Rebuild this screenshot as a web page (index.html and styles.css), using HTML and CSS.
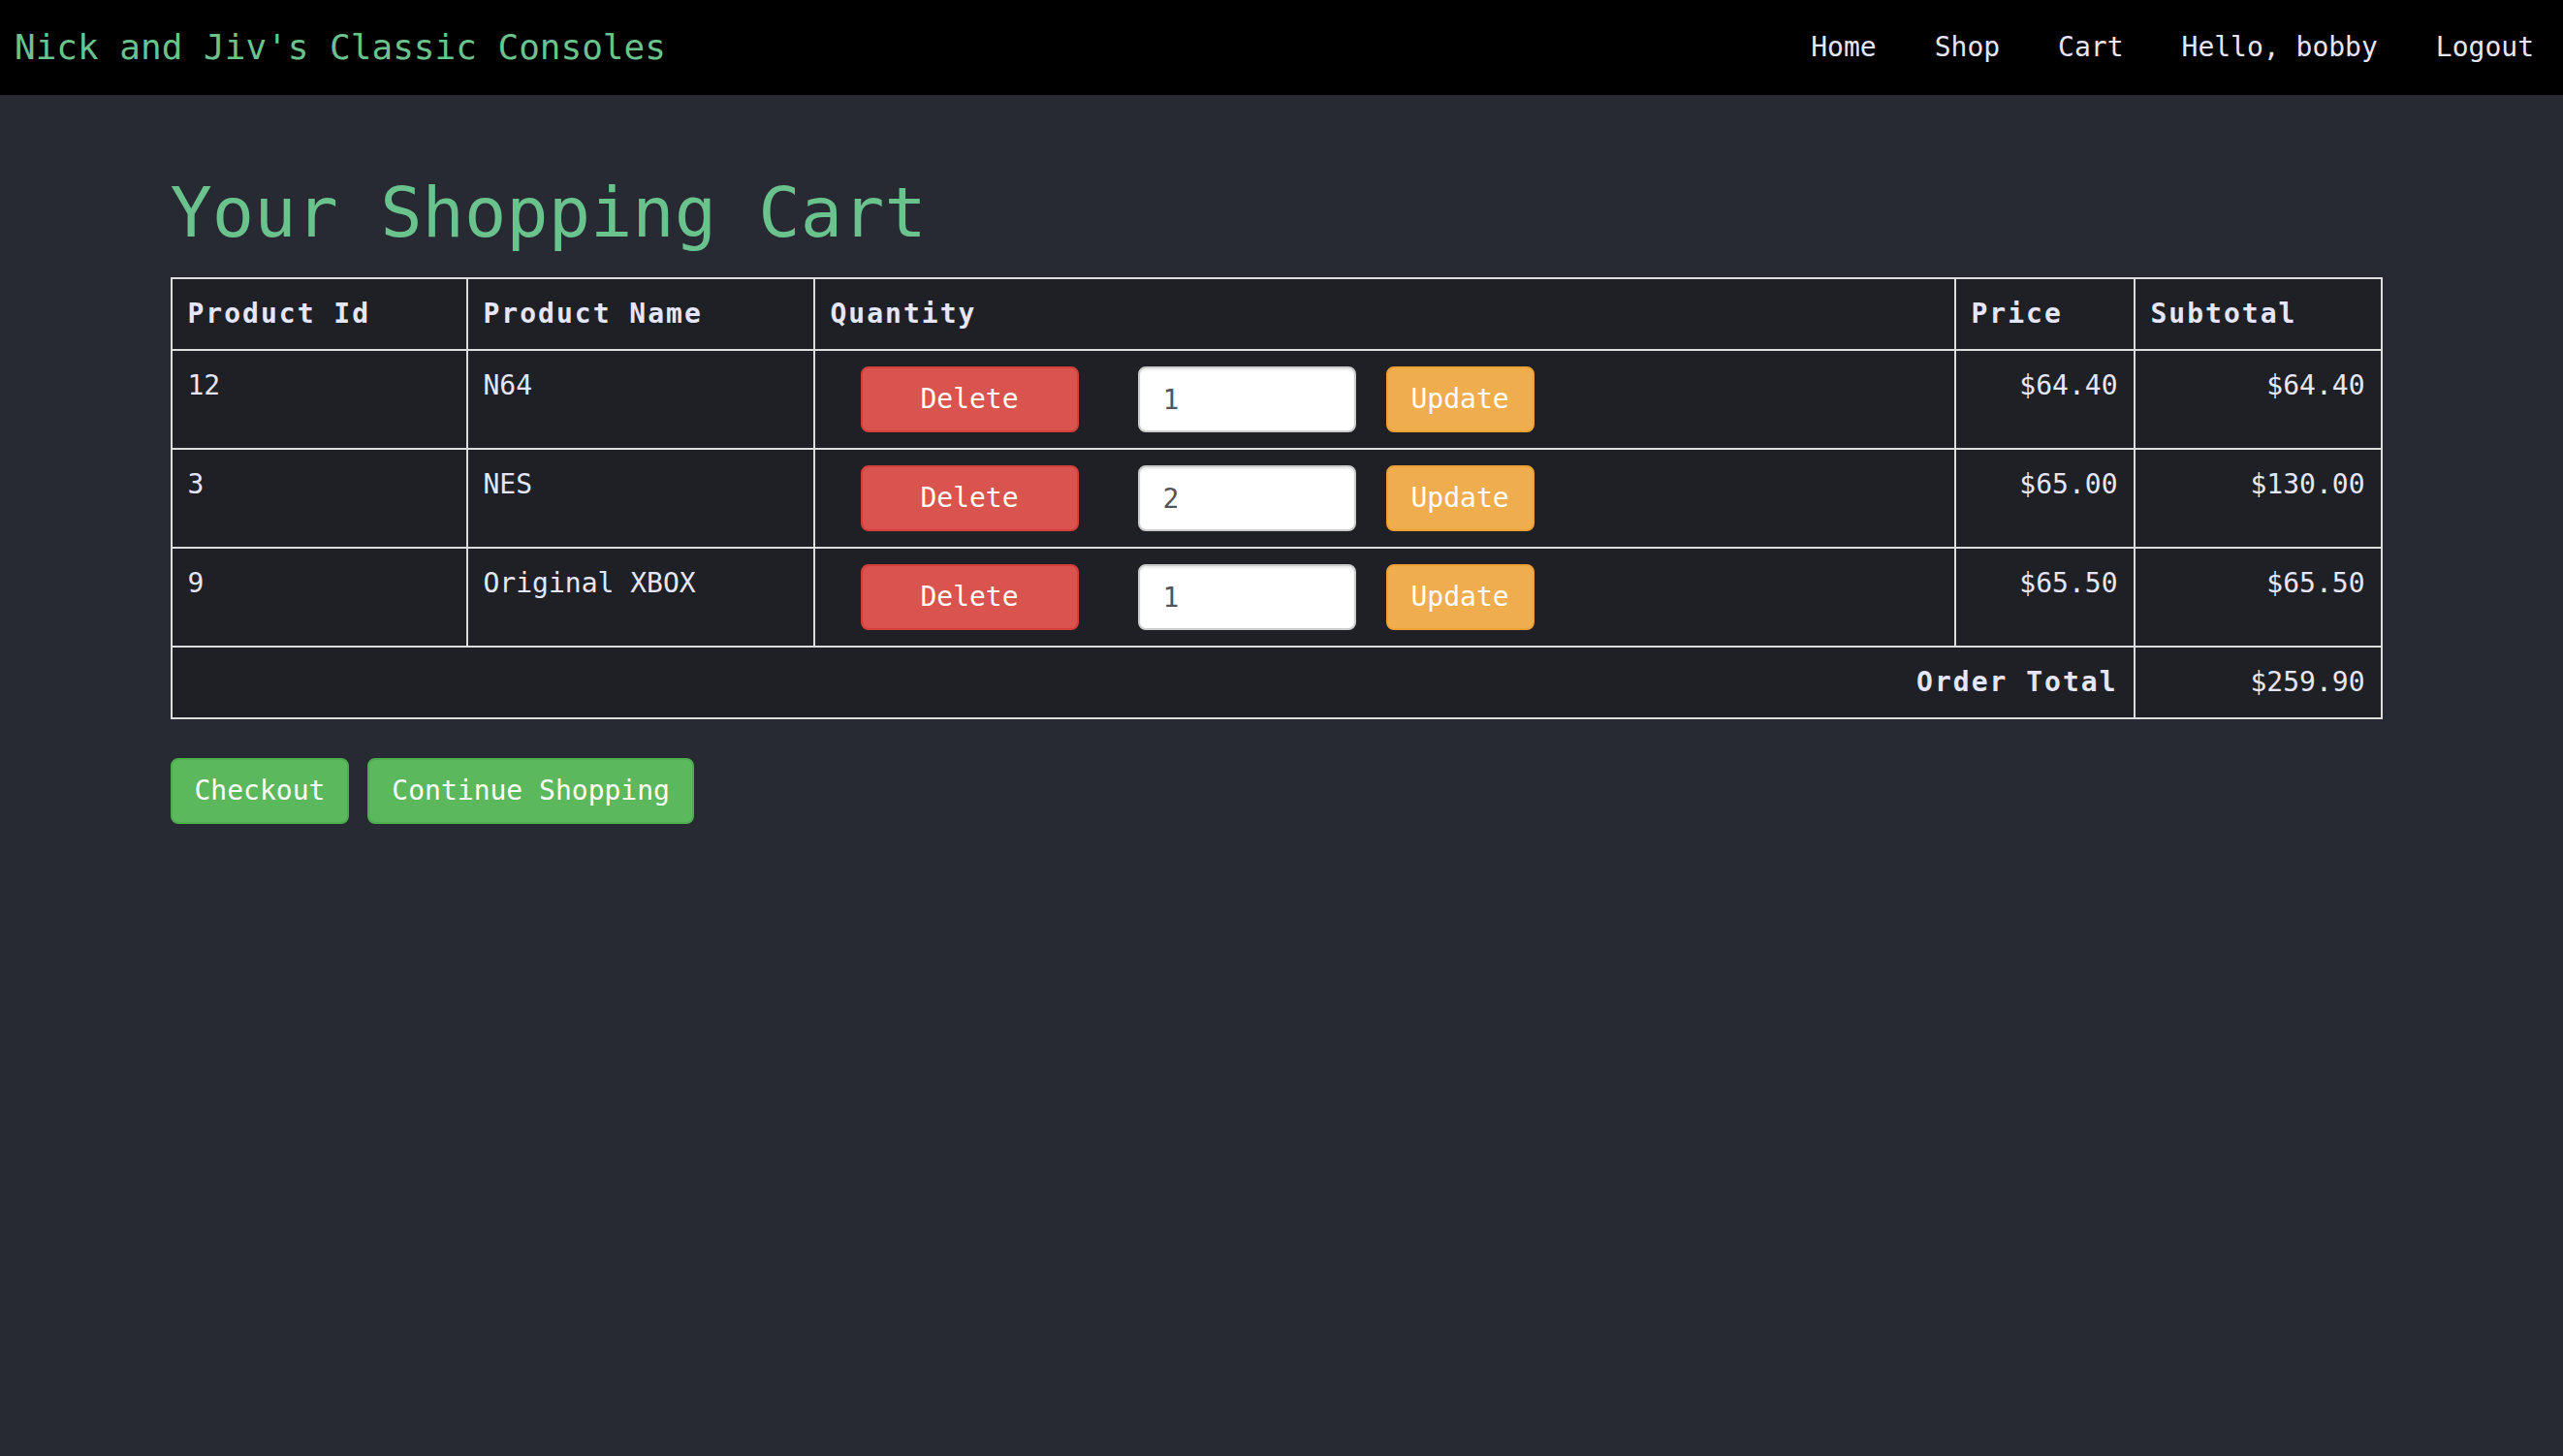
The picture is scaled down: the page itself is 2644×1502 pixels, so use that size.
FILE: index.html
```html
<!DOCTYPE html>
<html lang="en">
<head>
<meta charset="utf-8">
<title>Your Shopping Cart</title>
<link rel="stylesheet" href="styles.css">
</head>
<body>
<header class="navbar">
  <a class="brand" href="#">Nick and Jiv's Classic Consoles</a>
  <nav class="nav">
    <a href="#">Home</a>
    <a href="#">Shop</a>
    <a href="#">Cart</a>
    <a href="#">Hello, bobby</a>
    <a href="#">Logout</a>
  </nav>
</header>
<main class="page">
  <div class="container">
    <h1 class="title">Your Shopping Cart</h1>
    <table class="cart">
      <colgroup>
        <col class="c-id">
        <col class="c-name">
        <col class="c-qty">
        <col class="c-price">
        <col class="c-sub">
      </colgroup>
      <thead>
        <tr>
          <th>Product Id</th>
          <th>Product Name</th>
          <th>Quantity</th>
          <th>Price</th>
          <th>Subtotal</th>
        </tr>
      </thead>
      <tbody>
        <tr>
          <td>12</td>
          <td>N64</td>
          <td>
            <div class="qty-form">
              <button class="btn btn-danger del">Delete</button>
              <input class="qty-input" type="text" value="1">
              <button class="btn btn-warning">Update</button>
            </div>
          </td>
          <td class="num">$64.40</td>
          <td class="num">$64.40</td>
        </tr>
        <tr>
          <td>3</td>
          <td>NES</td>
          <td>
            <div class="qty-form">
              <button class="btn btn-danger del">Delete</button>
              <input class="qty-input" type="text" value="2">
              <button class="btn btn-warning">Update</button>
            </div>
          </td>
          <td class="num">$65.00</td>
          <td class="num">$130.00</td>
        </tr>
        <tr>
          <td>9</td>
          <td>Original XBOX</td>
          <td>
            <div class="qty-form">
              <button class="btn btn-danger del">Delete</button>
              <input class="qty-input" type="text" value="1">
              <button class="btn btn-warning">Update</button>
            </div>
          </td>
          <td class="num">$65.50</td>
          <td class="num">$65.50</td>
        </tr>
      </tbody>
      <tfoot>
        <tr>
          <th colspan="4" class="num">Order Total</th>
          <td class="num">$259.90</td>
        </tr>
      </tfoot>
    </table>
    <div class="actions">
      <a class="btn btn-success" href="#">Checkout</a>
      <a class="btn btn-success" href="#">Continue Shopping</a>
    </div>
  </div>
</main>
</body>
</html>
```
FILE: styles.css
```css
html, body {
  margin: 0;
  padding: 0;
}

body {
  background: #272a33;
  color: lavender;
  font-family: "DejaVu Sans Mono", "Liberation Mono", monospace;
  font-size: 28px;
  line-height: 40px;
  min-height: 1502px;
}

a {
  text-decoration: none;
  color: inherit;
}

.navbar {
  height: 98px;
  background: #000;
  display: flex;
  align-items: center;
  justify-content: space-between;
  padding-left: 15px;
}

.brand {
  font-size: 36px;
  line-height: 40px;
  color: #6ac38d;
}

.nav {
  display: flex;
  align-items: center;
}

.nav a {
  padding: 0 30px;
  font-size: 28px;
  color: lavender;
}

.page {
  padding-right: 13px;
}

.container {
  width: 2280px;
  margin: 0 auto;
}

.title {
  margin: 81px 0 27px;
  font-size: 72px;
  line-height: 80px;
  font-weight: normal;
  color: #6ac38d;
}

.cart {
  width: 2280px;
  table-layout: fixed;
  border-collapse: collapse;
  background: #1f2026;
  margin-bottom: 40px;
}

.c-id { width: 305px; }
.c-name { width: 358px; }
.c-qty { width: 1177px; }
.c-price { width: 185px; }
.c-sub { width: 255px; }

.cart th,
.cart td {
  border: 2px solid #dddddd;
  padding: 16px;
  text-align: left;
  vertical-align: top;
  font-size: 28px;
  line-height: 40px;
  color: lavender;
}

.cart th {
  font-weight: bold;
  letter-spacing: 2px;
  vertical-align: bottom;
}

.cart .num {
  text-align: right;
}

.qty-form {
  display: flex;
  align-items: center;
  padding-left: 31px;
}

.btn {
  display: inline-block;
  box-sizing: border-box;
  font-family: "DejaVu Sans Mono", "Liberation Mono", monospace;
  font-size: 28px;
  line-height: 40px;
  padding: 12px 24px;
  border: 2px solid transparent;
  border-radius: 8px;
  color: #fff;
  text-align: center;
  white-space: nowrap;
  cursor: pointer;
}

.btn-danger {
  background: #d9534f;
  border-color: #d43f3a;
}

.btn-warning {
  background: #f0ad4e;
  border-color: #eea236;
}

.btn-success {
  background: #5cb85c;
  border-color: #4cae4c;
  padding-left: 23px;
  padding-right: 23px;
}

.del {
  width: 225px;
  margin-right: 61px;
}

.qty-input {
  box-sizing: border-box;
  width: 225px;
  height: 68px;
  padding: 12px 24px;
  border: 2px solid #cccccc;
  border-radius: 8px;
  background: #fff;
  color: #555555;
  font-family: "DejaVu Sans Mono", "Liberation Mono", monospace;
  font-size: 28px;
  line-height: 40px;
  box-shadow: inset 0 2px 2px rgba(0, 0, 0, 0.075);
  margin-right: 31px;
}

.actions {
  display: flex;
  gap: 19px;
}
```
